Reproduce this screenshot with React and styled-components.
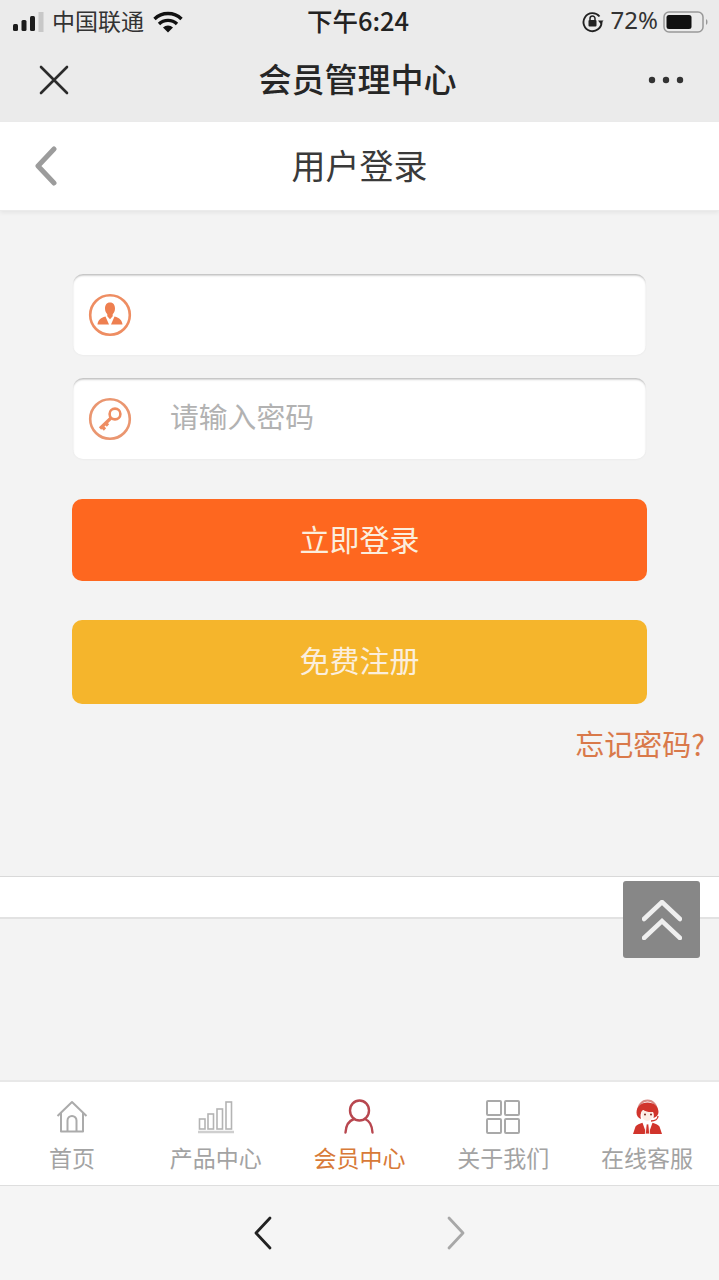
import React from "react";
import styled, { createGlobalStyle } from "styled-components";

const Global = createGlobalStyle`
  html, body { margin: 0; padding: 0; background: #f3f3f3; }
  * { box-sizing: border-box; }
  body { font-family: "Noto Sans CJK SC", "Noto Sans", sans-serif; }
`;

const Page = styled.div`
  width: 719px; height: 1280px; position: relative; overflow: hidden;
  display: flex; flex-direction: column; background: #f3f3f3;
`;
const TopChrome = styled.header`
  height: 122px; background: #ebebeb; display: flex; flex-direction: column;
`;
const StatusBar = styled.div`
  height: 40px; display: grid; grid-template-columns: 1fr auto 1fr; align-items: center;
  padding: 0 10px 0 12px; color: #222;
`;
const StatusLeft = styled.div`
  display: flex; align-items: center; gap: 7px; font-size: 23px; line-height: 40px;
`;
const Carrier = styled.span`
  color: #333; padding-bottom: 3px; margin-right: 2px;
`;
const StatusTime = styled.div`
  font-size: 25.5px; line-height: 36px; height: 40px; font-weight: 500; color: #222;
  margin-left: -5px;
`;
const StatusRight = styled.div`
  display: flex; align-items: center; justify-content: flex-end; gap: 5px; font-size: 24px; color: #333;
`;
const Percent = styled.span`
  line-height: 36px; height: 40px; font-family: "Noto Sans", sans-serif; font-size: 24px; margin-left: 2px;
`;
const NavBar = styled.div`
  height: 82px; display: grid; grid-template-columns: 108px 1fr 108px; align-items: center; padding-bottom: 2px;
`;
const NavIconLeft = styled.div`
  display: flex; padding-left: 38px;
`;
const NavIconRight = styled.div`
  display: flex; justify-content: flex-end; padding-right: 35px;
`;
const NavTitle = styled.h1`
  margin: 0; padding: 0 4px 4px 0; text-align: center; font-size: 33px; line-height: 40px; font-weight: 500; color: #262626;
`;
const PageHeader = styled.div`
  height: 89px; background: #fff; display: grid; grid-template-columns: 108px 1fr 108px; align-items: center;
  border-bottom: 1px solid #ebebeb; box-shadow: 0 2px 4px rgba(0,0,0,.06);
`;
const BackSlot = styled.div`
  display: flex; padding-left: 33px;
`;
const PageTitle = styled.h2`
  margin: 0; padding-bottom: 3px; text-align: center; font-size: 34px; line-height: 44px; font-weight: 400; color: #3a3a3a;
`;
const Form = styled.main`
  padding: 63px 72px 0; display: flex; flex-direction: column;
`;
const Field = styled.div`
  height: 81px; margin: 0 1px 23px 1px; background: #fff; border-radius: 10px; display: flex; align-items: center;
  padding-left: 15px; box-shadow: inset 0 2px 2px -0.5px #bdbdbd, 0 1px 2px rgba(0,0,0,.03);
`;
const Placeholder = styled.span`
  margin: 0 0 4px 38px; font-size: 28.8px; color: #b2b2b2; line-height: 40px; height: 42px;
`;
const Button = styled.button`
  display: block; width: 100%; height: ${p => p.$h}px; margin-top: ${p => p.$mt}px; border: 0; border-radius: 10px;
  background: ${p => p.$bg}; color: #fbeedd; font: 400 30px/40px "Noto Sans CJK SC", sans-serif;
  padding: 0 0 ${p => p.$lift}px;
`;
const Forgot = styled.a`
  display: block; margin: 19px -58px 0 0; text-align: right; font-size: 29px; line-height: 40px; color: #d9794a;
`;
const Strip = styled.div`
  height: 43px; margin-top: 113px; background: #fff; border-top: 1px solid #d9d9d9; border-bottom: 2px solid #e2e2e2;
`;
const Spacer = styled.div`flex: 1;`;
const ToTop = styled.a`
  position: absolute; left: 623px; top: 881px; width: 77px; height: 77px; border-radius: 3px; background: #878787;
  display: flex; align-items: center; justify-content: center;
`;
const TabBar = styled.nav`
  height: 106px; background: #fff; border-top: 2px solid #e8e8e8; border-bottom: 1px solid #dedede;
  display: grid; grid-template-columns: repeat(5, 1fr);
`;
const Tab = styled.a`
  display: flex; flex-direction: column; align-items: center; font-size: 23px; line-height: 30px;
  color: ${p => (p.$active ? "#d87a38" : "#a3a3a3")};
`;
const TabIcon = styled.div`
  height: 60px; padding-top: 18px; display: flex; align-items: flex-start; justify-content: center;
`;
const BrowserBar = styled.div`
  height: 94px; background: #f5f5f5; display: flex; justify-content: center; align-items: flex-start; gap: 173px;
  padding: 29px 0 0 0;
`;

const Signal = () => (
  <svg width="32" height="22" viewBox="0 0 32 22" style={{ marginLeft: 1 }}>
    <rect x="0" y="13" width="5" height="7" rx="1.5" fill="#1c1c1c" />
    <rect x="8.500" y="9" width="5" height="11" rx="1.5" fill="#1c1c1c" />
    <rect x="17" y="5" width="5" height="15" rx="1.5" fill="#1c1c1c" />
    <rect x="25.500" y="1" width="5" height="20" fill="#c8c8c8" />
  </svg>
);
const Wifi = () => (
  <svg width="30" height="22" viewBox="0 0 30 22">
    <path d="M1.500 8a19.500 19.500 0 0 1 27 0M6 13a13 13 0 0 1 18 0" fill="none" stroke="#111" strokeWidth="3.400" />
    <path d="M10 16.500a7.500 7.500 0 0 1 10 0L15 21.500z" fill="#111" />
  </svg>
);
const Lock = () => (
  <svg width="22" height="22" viewBox="0 0 22 22">
    <path d="M17.500 5.500A9 9 0 1 0 19.500 11" fill="none" stroke="#222" strokeWidth="1.900" />
    <path d="M16 9.500h5.500L18.700 13z" fill="#222" />
    <rect x="6.500" y="9" width="8" height="6.500" rx="1" fill="#222" />
    <path d="M8 9V7.500a2.500 2.500 0 0 1 5 0V9" fill="none" stroke="#222" strokeWidth="1.500" />
  </svg>
);
const Battery = () => (
  <svg width="46" height="24" viewBox="0 0 46 24">
    <rect x="1" y="2" width="39" height="20" rx="5" fill="none" stroke="#999" strokeWidth="1.500" />
    <rect x="3.500" y="5" width="25" height="14" rx="2.500" fill="#111" />
    <path d="M43 9v6a3 3 0 0 0 1.500-3A3 3 0 0 0 43 9z" fill="#999" />
  </svg>
);
const Close = () => (
  <svg width="32" height="32" viewBox="0 0 32 32">
    <path d="M3 3l26 26M29 3L3 29" stroke="#2b2b2b" strokeWidth="2.600" strokeLinecap="round" />
  </svg>
);
const More = () => (
  <svg width="36" height="10" viewBox="0 0 36 10">
    <circle cx="4" cy="5" r="3.200" fill="#333" />
    <circle cx="18" cy="5" r="3.200" fill="#333" />
    <circle cx="32" cy="5" r="3.200" fill="#333" />
  </svg>
);
const Back = () => (
  <svg width="26" height="40" viewBox="0 0 26 40">
    <path d="M21 3L5 20l16 17" fill="none" stroke="#9c9c9c" strokeWidth="5" strokeLinecap="round" strokeLinejoin="round" />
  </svg>
);
const UserBadge = () => (
  <svg width="44" height="44" viewBox="0 0 44 44">
    <circle cx="22" cy="22" r="19.800" fill="none" stroke="#ee8d62" strokeWidth="2.600" />
    <path d="M22 9.500c3.500 0 5 2.700 5 6 0 2.300-.9 4.300-2.300 5.700v2l-2.700 3-2.700-3v-2c-1.400-1.400-2.300-3.400-2.300-5.700 0-3.300 1.500-6 5-6z" fill="#ee7f50" />
    <path d="M17.500 23.500L21 31.500H9.500c.4-4 2.800-6.800 8-8zM26.500 23.500L23 31.500h11.500c-.4-4-2.800-6.800-8-8z" fill="#ee7f50" />
  </svg>
);
const KeyBadge = () => (
  <svg width="44" height="44" viewBox="0 0 44 44">
    <circle cx="22" cy="22" r="19.800" fill="none" stroke="#ea9670" strokeWidth="2.600" />
    <circle cx="27" cy="17" r="5.400" fill="none" stroke="#ee8d62" strokeWidth="2.600" />
    <path d="M23 21L12 31.500M13.500 29l3.500 3.500M17 25.500l3 3" fill="none" stroke="#ee8d62" strokeWidth="3.200" />
  </svg>
);
const Chevrons = () => (
  <svg width="40" height="40" viewBox="0 0 40 40">
    <path d="M2 19L20 2l18 17M2 38l18-17 18 17" fill="none" stroke="#efefef" strokeWidth="4.500" strokeLinecap="round" strokeLinejoin="miter" />
  </svg>
);
const Home = () => (
  <svg width="32" height="34" viewBox="0 0 32 34">
    <path d="M1.500 16L16 2l14.500 14M5 13v18.500h22V13M11.500 31.500V20.500a4.500 4.500 0 0 1 9 0v11" fill="none" stroke="#ababab" strokeWidth="2" strokeLinejoin="round" />
  </svg>
);
const Bars = () => (
  <svg width="36" height="33" viewBox="0 0 36 33" style={{ marginTop: 1 }}>
    <g fill="none" stroke="#b4b4b4" strokeWidth="1.600">
      <rect x="1.500" y="18" width="5.500" height="10" />
      <rect x="10" y="13" width="5.500" height="15" />
      <rect x="19" y="8" width="5.500" height="20" />
      <rect x="28" y="1" width="5.500" height="27" />
      <path d="M0 31h36" strokeWidth="2.500" stroke="#cfcfcf" />
    </g>
  </svg>
);
const Person = () => (
  <svg width="30" height="35" viewBox="0 0 30 35" style={{ marginTop: -1 }}>
    <ellipse cx="15.500" cy="11.500" rx="9.500" ry="10" fill="none" stroke="#b8474f" strokeWidth="2.400" />
    <path d="M1.500 33.500C2 26 5.500 21.500 10 20M28.500 33.500C28 26 25 21.500 21 20" fill="none" stroke="#b8474f" strokeWidth="2.400" strokeLinecap="round" />
  </svg>
);
const Grid = () => (
  <svg width="34" height="34" viewBox="0 0 34 34" style={{ marginLeft: -1 }}>
    <g fill="none" stroke="#a9a9a9" strokeWidth="2">
      <rect x="1" y="1" width="14" height="14" rx="1" />
      <rect x="19" y="1" width="14" height="14" rx="1" />
      <rect x="1" y="19" width="14" height="14" rx="1" />
      <rect x="19" y="19" width="14" height="14" rx="1" />
    </g>
  </svg>
);
const Agent = () => (
  <svg width="29" height="36" viewBox="0 0 29 36" style={{ marginTop: -1 }}>
    <path d="M5 13C5 6 9 1.500 14.500 1.500S24 6 24 13" fill="none" stroke="#d98a85" strokeWidth="2" />
    <path d="M14.500 3.500C8 3.500 3.500 8 3.500 13.500c0 3 1.500 5.500 4.500 6.500C7 17 7.500 13 10 11c3 2 7 2.500 10 2 1 2 1 4 .5 6 3-1 5-3 5-6 0-5.500-4.500-9.500-11-9.500z" fill="#d1342c" />
    <path d="M8.500 13c1-1 1.500-1.500 1.500-2 3 2 7 2.500 10 2 .8 4-2 9-5.700 9C11 22 8.300 18 8.500 13z" fill="#fdeee6" />
    <circle cx="12" cy="15.500" r="1" fill="#7a2a24" />
    <circle cx="18" cy="15.500" r="1" fill="#7a2a24" />
    <path d="M25 17c0 3-3 5-7 5" fill="none" stroke="#d1342c" strokeWidth="1.300" />
    <path d="M0 35l2.500-7.500c1.500-2 4-3 7-3.800l4 11.300zM29 35l-2.500-7.500c-1.500-2-4-3-7-3.800l-4 11.300z" fill="#d1342c" />
    <path d="M13.300 25h2.400l1 10h-4.400z" fill="#d1342c" stroke="#fff" strokeWidth=".8" />
  </svg>
);
const ArrowL = () => (
  <svg width="20" height="36" viewBox="0 0 20 36">
    <path d="M17 3L3 18l14 15" fill="none" stroke="#222" strokeWidth="2.800" strokeLinecap="round" strokeLinejoin="round" />
  </svg>
);
const ArrowR = () => (
  <svg width="20" height="36" viewBox="0 0 20 36">
    <path d="M3 3l14 15L3 33" fill="none" stroke="#a8a8a8" strokeWidth="2.800" strokeLinecap="round" strokeLinejoin="round" />
  </svg>
);

const tabs = [
  { label: "首页", icon: <Home /> },
  { label: "产品中心", icon: <Bars /> },
  { label: "会员中心", icon: <Person />, active: true },
  { label: "关于我们", icon: <Grid /> },
  { label: "在线客服", icon: <Agent /> },
];

export default function App() {
  return (
    <Page>
      <Global />
      <TopChrome>
        <StatusBar>
          <StatusLeft><Signal /><Carrier>中国联通</Carrier><Wifi /></StatusLeft>
          <StatusTime>下午6:24</StatusTime>
          <StatusRight><Lock /><Percent>72%</Percent><Battery /></StatusRight>
        </StatusBar>
        <NavBar>
          <NavIconLeft><Close /></NavIconLeft>
          <NavTitle>会员管理中心</NavTitle>
          <NavIconRight><More /></NavIconRight>
        </NavBar>
      </TopChrome>
      <PageHeader>
        <BackSlot><Back /></BackSlot>
        <PageTitle>用户登录</PageTitle>
      </PageHeader>
      <Form>
        <Field><UserBadge /></Field>
        <Field><KeyBadge /><Placeholder>请输入密码</Placeholder></Field>
        <Button $bg="#fe671f" $h={82} $mt={17} $lift={4}>立即登录</Button>
        <Button $bg="#f5b52c" $h={84} $mt={39} $lift={6}>免费注册</Button>
        <Forgot>忘记密码?</Forgot>
      </Form>
      <Strip />
      <Spacer />
      <ToTop><Chevrons /></ToTop>
      <TabBar>
        {tabs.map(t => (
          <Tab key={t.label} $active={t.active}>
            <TabIcon>{t.icon}</TabIcon>
            {t.label}
          </Tab>
        ))}
      </TabBar>
      <BrowserBar><ArrowL /><ArrowR /></BrowserBar>
    </Page>
  );
}
